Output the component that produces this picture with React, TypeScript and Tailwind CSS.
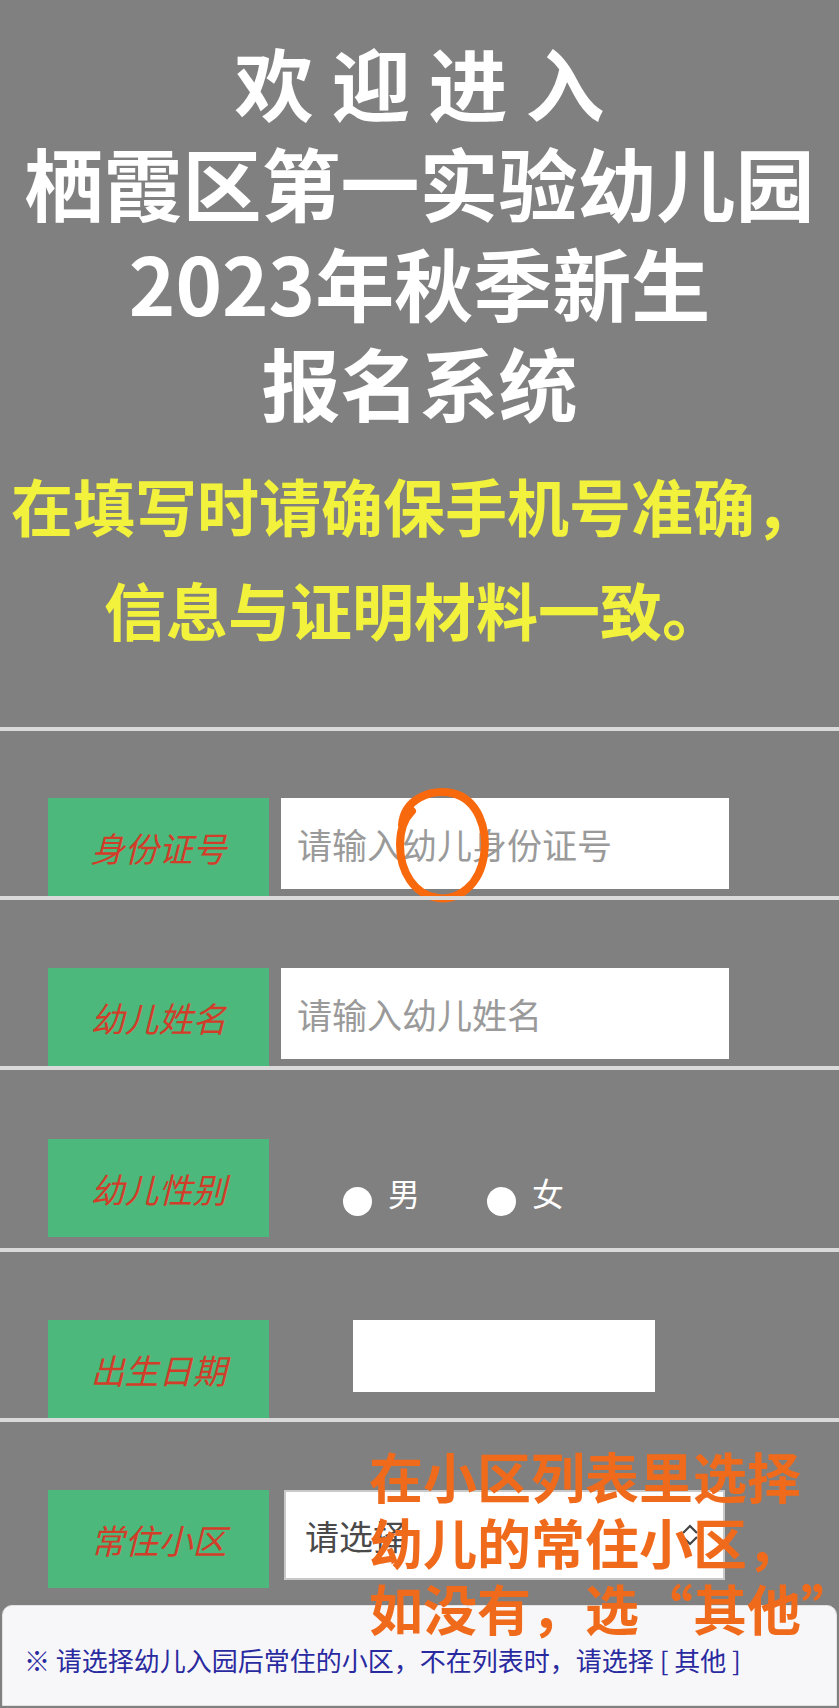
import React from 'react';

const labelCls =
  'w-[221px] h-[98px] shrink-0 bg-[#4cb87b] flex items-center justify-center text-[34px] italic text-[#d23d2a]';

function Label({ text }: { text: string }) {
  return <div className={labelCls}>{text}</div>;
}

function Row({
  children,
  pad,
}: {
  children: React.ReactNode;
  pad: string;
}) {
  return (
    <div className="relative">
      <div className="h-[4px] bg-[#dadada]" />
      <div className={'flex items-start pl-[48px] ' + pad}>{children}</div>
    </div>
  );
}

function Radio({ text, className }: { text: string; className?: string }) {
  return (
    <div className={'flex items-center ' + (className ?? '')}>
      <span className="mt-[18px] w-[29px] h-[29px] rounded-full bg-white" />
      <span className="ml-[16px]">{text}</span>
    </div>
  );
}

export default function App() {
  return (
    <div className="relative w-full min-h-screen overflow-hidden bg-[#808080] font-['Noto_Sans_CJK_SC',sans-serif]">
      {/* header */}
      <div className="pt-[32px] text-center text-white font-bold text-[79px] leading-[100px] whitespace-nowrap">
        <div>欢 迎 进 入</div>
        <div>栖霞区第一实验幼儿园</div>
        <div>2023年秋季新生</div>
        <div>报名系统</div>
      </div>

      <div className="mt-[21px] pr-[11px] text-center text-[#f2f23c] font-bold text-[62px] leading-[104px] whitespace-nowrap">
        <div>在填写时请确保手机号准确，</div>
        <div>信息与证明材料一致。</div>
      </div>

      {/* form */}
      <div className="mt-[66px]">
        <Row pad="pt-[67px]">
          <Label text="身份证号" />
          <input
            readOnly
            placeholder="请输入幼儿身份证号"
            className="ml-[12px] w-[448px] h-[91px] bg-white pl-[16px] text-[35px] outline-none placeholder:text-[#9a9a9a]"
          />
          <svg
            className="absolute left-[390px] top-[58px]"
            width="106"
            height="120"
            viewBox="0 0 106 120"
            fill="none"
          >
            <path
              d="M12 40 C14 14 40 4 62 8 C88 14 98 44 94 70 C90 100 68 116 48 113 C24 110 10 86 10 60 C10 46 14 34 22 26"
              stroke="#f7690c"
              strokeWidth="8"
              strokeLinecap="round"
            />
          </svg>
        </Row>

        <Row pad="pt-[68px]">
          <Label text="幼儿姓名" />
          <input
            readOnly
            placeholder="请输入幼儿姓名"
            className="ml-[12px] w-[448px] h-[91px] bg-white pl-[16px] text-[35px] outline-none placeholder:text-[#9a9a9a]"
          />
        </Row>

        <Row pad="pt-[69px] pb-[11px]">
          <Label text="幼儿性别" />
          <div className="ml-[74px] h-[98px] pt-[8px] flex items-center text-[32px] text-white">
            <Radio text="男" />
            <Radio text="女" className="ml-[67px]" />
          </div>
        </Row>

        <Row pad="pt-[68px]">
          <Label text="出生日期" />
          <div className="ml-[84px] w-[302px] h-[72px] bg-white" />
        </Row>

        <Row pad="pt-[68px]">
          <Label text="常住小区" />
          <div className="ml-[15px] w-[441px] h-[90px] bg-white border-2 border-[#c9c9c9] flex items-center justify-between pl-[19px] pr-[24px] text-[34px] text-[#4a4a4a]">
            <span>请选择</span>
            <svg width="18" height="24" viewBox="0 0 18 24" fill="none">
              <path d="M2 10 L9 3 L16 10" stroke="#444" strokeWidth="2.2" />
              <path d="M2 14 L9 21 L16 14" stroke="#444" strokeWidth="2.2" />
            </svg>
          </div>
          <div className="absolute left-[369px] top-[25px] text-[54px] leading-[66px] font-bold text-[#f06a1c] whitespace-nowrap">
            <div>在小区列表里选择</div>
            <div>幼儿的常住小区，</div>
            <div>如没有，选“其他”</div>
          </div>
        </Row>
      </div>

      {/* tip */}
      <div className="mt-[17px] mx-[2px] h-[101px] rounded-t-[10px] bg-[#f7f7f9] border border-[#e2e2e2] pt-[34px] pl-[21px] text-[26px] leading-[39px] text-[#2a2aa0] whitespace-nowrap">
        ※ 请选择幼儿入园后常住的小区，不在列表时，请选择 [ 其他 ]
      </div>
    </div>
  );
}
